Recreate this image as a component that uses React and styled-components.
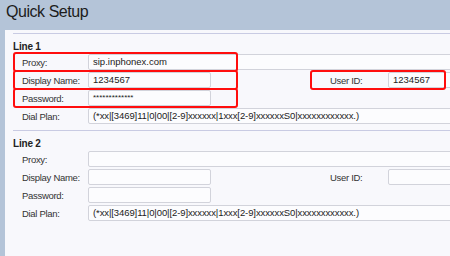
import styled, { createGlobalStyle } from "styled-components";

const GlobalStyle = createGlobalStyle`
  html, body {
    margin: 0;
    padding: 0;
    overflow: hidden;
    background: #b4c4d8;
  }
`;

const lines = [
  {
    name: "Line 1",
    proxy: "sip.inphonex.com",
    displayName: "1234567",
    userId: "1234567",
    password: "*************",
    highlight: true,
  },
  {
    name: "Line 2",
    proxy: "",
    displayName: "",
    userId: "",
    password: "",
    highlight: false,
  },
];

const dialPlan =
  "(*xx|[3469]11|0|00|[2-9]xxxxxx|1xxx[2-9]xxxxxxS0|xxxxxxxxxxxx.)";

const App = () => {
  return (
    <>
      <GlobalStyle />
      <Page>
        <Title>Quick Setup</Title>
        <Panel>
          {lines.map((line) => (
            <Section key={line.name}>
              <Heading>{line.name}</Heading>
              <Row>
                <Label>Proxy:</Label>
                <Field $wide>{line.proxy}</Field>
                {line.highlight && <Highlight $left={0} $width={225} />}
              </Row>
              <Row>
                <Label>Display Name:</Label>
                <Field>{line.displayName}</Field>
                <UserGroup>
                  <Label $short>User ID:</Label>
                  <Field $wide>{line.userId}</Field>
                </UserGroup>
                {line.highlight && (
                  <>
                    <Highlight $left={0} $width={225} />
                    <Highlight $left={297} $width={136} />
                  </>
                )}
              </Row>
              <Row>
                <Label>Password:</Label>
                <Field $dots>{line.password}</Field>
                {line.highlight && <Highlight $left={0} $width={225} />}
              </Row>
              <Row>
                <Label>Dial Plan:</Label>
                <Field $wide $tight>{dialPlan}</Field>
              </Row>
            </Section>
          ))}
        </Panel>
      </Page>
    </>
  );
};

export default App;

// Styled Components
const Page = styled.div`
  width: 450px;
  height: 256px;
  display: flex;
  flex-direction: column;
  font-family: "Liberation Sans", Arial, sans-serif;
  overflow: hidden;
`;

const Title = styled.h1`
  margin: 0;
  height: 30px;
  padding: 2px 0 0 6px;
  box-sizing: border-box;
  font-size: 16px;
  font-weight: normal;
  letter-spacing: -0.45px;
  line-height: 20px;
  color: #1c1c1c;
`;

const Panel = styled.div`
  flex: 1;
  margin-left: 5px;
  padding-top: 3px;
  background: #f8f8fc;
`;

const Section = styled.div`
  margin-left: 8px;
  border-top: 1px solid #c9cbe3;
  padding-bottom: 5px;
`;

const Heading = styled.div`
  padding-top: 7px;
  font-size: 10px;
  font-weight: bold;
  letter-spacing: -0.2px;
  line-height: 12px;
  color: #222;
`;

const Row = styled.div`
  position: relative;
  display: flex;
  align-items: center;
  height: 18px;
`;

const Label = styled.span`
  flex: none;
  width: ${(p) => (p.$short ? "58px" : "66px")};
  padding-left: ${(p) => (p.$short ? "20px" : "9px")};
  font-size: 9.5px;
  letter-spacing: -0.3px;
  color: #333;
`;

const Field = styled.div`
  flex: none;
  box-sizing: border-box;
  width: ${(p) => (p.$wide ? "420px" : "123px")};
  height: 16px;
  padding-left: 4px;
  border: 1px solid #d2d3db;
  border-radius: 2px;
  background: #fcfcfe;
  font-size: ${(p) => (p.$dots ? "8px" : "9.5px")};
  letter-spacing: ${(p) => (p.$tight ? "-0.1px" : "0")};
  line-height: 14px;
  color: #222;
  white-space: nowrap;
  overflow: hidden;
`;

const UserGroup = styled.div`
  display: flex;
  align-items: center;
  margin-left: 99px;
`;

const Highlight = styled.div`
  position: absolute;
  top: -1px;
  bottom: -1px;
  left: ${(p) => p.$left}px;
  width: ${(p) => p.$width}px;
  box-sizing: border-box;
  border: 2px solid #ff0d0d;
  border-radius: 3px;
  pointer-events: none;
`;
